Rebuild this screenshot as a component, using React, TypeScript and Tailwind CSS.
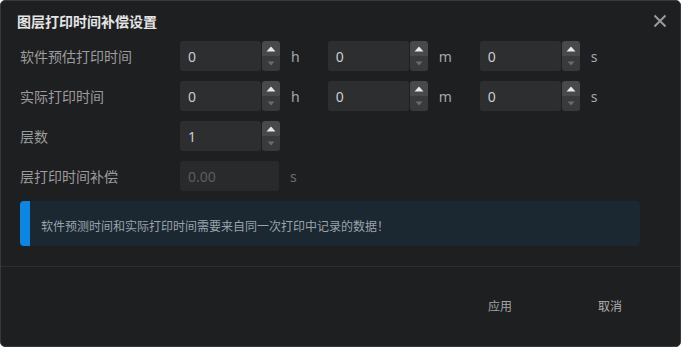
import { useState } from "react";

function Spinner() {
  return (
    <div className="flex flex-col w-[18px] h-[30px] rounded-[3px] overflow-hidden ml-px">
      <div className="flex-1 flex items-center justify-center bg-[#48494b]">
        <svg width="10" height="6" viewBox="0 0 10 6">
          <path d="M5 0.5 L9.5 5.5 L0.5 5.5 Z" fill="#e8e8e8" />
        </svg>
      </div>
      <div className="flex-1 flex items-center justify-center bg-[#393a3c]">
        <svg width="8" height="5" viewBox="0 0 8 5">
          <path d="M0.5 0.5 L7.5 0.5 L4 4.5 Z" fill="#6a6b6d" />
        </svg>
      </div>
    </div>
  );
}

function NumberField({ value, unit }: { value: string; unit?: string }) {
  return (
    <div className="flex items-center">
      <div className="w-[81px] h-[30px] rounded-[3px] bg-[#2d2e30] flex items-center pl-2 text-[14px] text-[#c9ccd0]">
        {value}
      </div>
      <Spinner />
      {unit && <span className="ml-[11px] text-[14px] text-[#a8a8a8]">{unit}</span>}
    </div>
  );
}

function Row({ label, children }: { label: string; children: React.ReactNode }) {
  return (
    <div className="flex items-center h-[30px]">
      <div className="w-[160px] text-[14px] text-[#9c9c9c]">{label}</div>
      <div className="flex items-center gap-[28px]">{children}</div>
    </div>
  );
}

export default function App() {
  const [open] = useState(true);
  if (!open) return null;
  return (
    <div
      className="w-[681px] h-[347px] bg-[#1e1f21] border border-[#38393b] rounded-[5px] flex flex-col overflow-hidden"
      style={{ fontFamily: '"Noto Sans", "Noto Sans CJK SC", sans-serif' }}
    >
      <div className="flex items-center justify-between h-[40px] pl-4 pr-[13px]">
        <div className="text-[14px] font-bold text-[#e4e4e4]">图层打印时间补偿设置</div>
        <svg width="14" height="14" viewBox="0 0 14 14">
          <path d="M1.5 1.5 L12.5 12.5 M12.5 1.5 L1.5 12.5" stroke="#9a9a9a" strokeWidth="2" />
        </svg>
      </div>

      <div className="flex flex-col gap-[10px] pl-[19px]">
        <Row label="软件预估打印时间">
          <NumberField value="0" unit="h" />
          <NumberField value="0" unit="m" />
          <NumberField value="0" unit="s" />
        </Row>
        <Row label="实际打印时间">
          <NumberField value="0" unit="h" />
          <NumberField value="0" unit="m" />
          <NumberField value="0" unit="s" />
        </Row>
        <Row label="层数">
          <NumberField value="1" />
        </Row>
        <Row label="层打印时间补偿">
          <div className="flex items-center">
            <div className="w-[99px] h-[30px] rounded-[3px] bg-[#292a2c] flex items-center pl-2 text-[14px] text-[#5c5e60]">
              0.00
            </div>
            <span className="ml-[11px] text-[14px] text-[#6e6e6e]">s</span>
          </div>
        </Row>
      </div>

      <div className="mx-[19px] mt-[10px] h-[45px] w-[620px] rounded-[4px] bg-[#1b2731] flex items-center overflow-hidden">
        <div className="w-[10px] h-full bg-[#0b86e3]" />
        <div
          className="pl-[11px] pt-[5px] text-[12px] text-[#9aa3ab]"
          style={{ fontFamily: '"Noto Sans CJK SC", sans-serif' }}
        >
          软件预测时间和实际打印时间需要来自同一次打印中记录的数据！
        </div>
      </div>

      <div className="mt-[20px] border-t border-[#2c2d2f]" />

      <div className="flex-1 flex items-center justify-end gap-[10px] pr-[20px] pt-[1px]">
        <button className="w-[100px] h-[32px] text-[12px] text-[#a3a3a3]">应用</button>
        <button className="w-[100px] h-[32px] text-[12px] text-[#b0b0b0]">取消</button>
      </div>
    </div>
  );
}
